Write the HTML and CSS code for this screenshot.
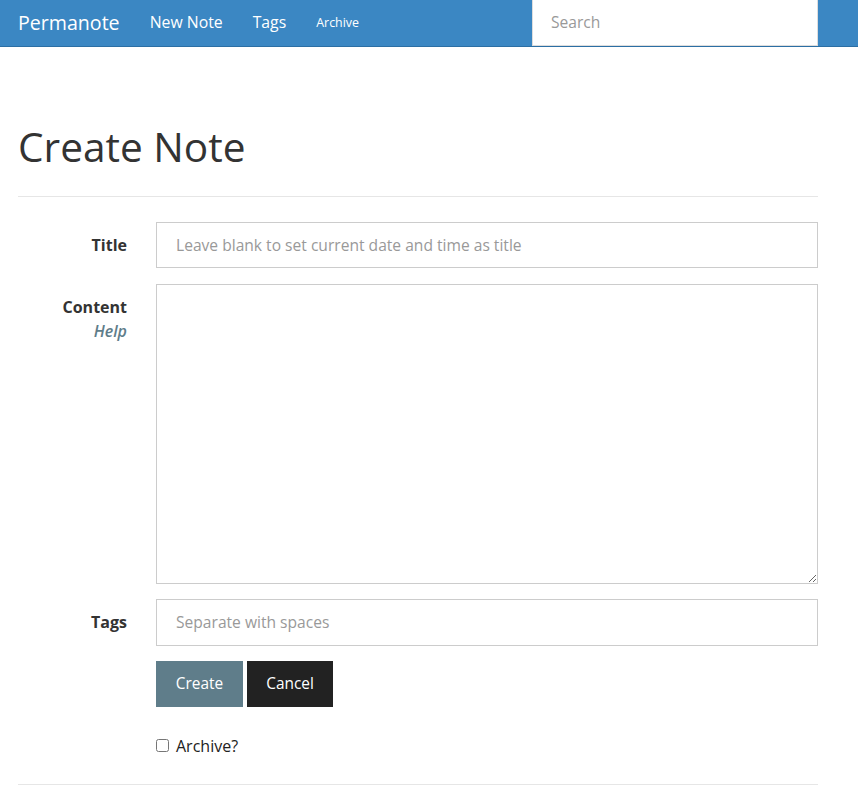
FILE: index.html
```html
<!DOCTYPE html>
<html lang="en">
<head>
<meta charset="utf-8">
<title>Create Note - Permanote</title>
<link rel="stylesheet" href="styles.css">
</head>
<body>
<nav class="navbar">
  <a class="brand" href="#">Permanote</a>
  <a class="nav-link" href="#">New Note</a>
  <a class="nav-link" href="#">Tags</a>
  <a class="nav-link small" href="#">Archive</a>
  <div class="spacer"></div>
  <input class="search" type="text" placeholder="Search">
</nav>
<main class="container">
  <h1 class="page-title">Create Note</h1>
  <hr class="rule">
  <form class="form">
    <div class="row">
      <label class="label">Title</label>
      <input class="field" type="text" placeholder="Leave blank to set current date and time as title">
    </div>
    <div class="row">
      <div class="label">
        <div>Content</div>
        <a class="help" href="#">Help</a>
      </div>
      <textarea class="field area"></textarea>
    </div>
    <div class="row row-tags">
      <label class="label">Tags</label>
      <input class="field" type="text" placeholder="Separate with spaces">
    </div>
    <div class="row row-buttons">
      <div class="label"></div>
      <div class="buttons">
        <button type="button" class="btn btn-primary">Create</button>
        <button type="button" class="btn btn-dark">Cancel</button>
      </div>
    </div>
    <div class="row">
      <div class="label"></div>
      <label class="check"><input type="checkbox" class="checkbox"> Archive?</label>
    </div>
  </form>
  <hr class="rule bottom">
</main>
</body>
</html>
```
FILE: styles.css
```css
* { box-sizing: border-box; }
html, body { margin: 0; padding: 0; }
body {
  font-family: "Open Sans", "DejaVu Sans", sans-serif;
  font-size: 15.6px;
  color: #333;
  background: #fff;
}
.navbar {
  display: flex;
  align-items: center;
  height: 47px;
  background: #3b87c3;
  border-bottom: 1px solid #2c6fa4;
  padding-left: 18px;
  padding-right: 40px;
  padding-bottom: 2px;
}
.navbar a { color: #fff; text-decoration: none; }
.brand { font-size: 19.6px; margin-right: 30px; }
.nav-link { font-size: 15.8px; margin-right: 30px; }
.nav-link.small { font-size: 12.4px; }
.spacer { flex: 1; }
.search {
  width: 286px;
  height: 46px;
  align-self: flex-start;
  border: 1px solid #ddd;
  border-top: none;
  padding: 0 18px 2px;
  font-family: inherit;
  font-size: 15.6px;
  color: #555;
  outline: none;
}
.search::placeholder { color: #999; }
.container {
  width: 800px;
  margin-left: 18px;
  padding-top: 76px;
}
.page-title {
  margin: 0;
  font-size: 40.6px;
  font-weight: 400;
  line-height: 1.2;
  color: #333;
}
.rule {
  border: 0;
  border-top: 1px solid #e6e6e6;
  margin: 24px 0 25px;
}
.rule.bottom { margin: 27px 0 0; }
.form { display: flex; flex-direction: column; gap: 16px; }
.row { display: flex; align-items: flex-start; }
.row-tags { margin-top: -1px; }
.row-tags .field { height: 47px; }
.row-buttons { margin-top: -1px; }
.label {
  width: 138px;
  padding-right: 29px;
  text-align: right;
  font-weight: 700;
  font-size: 16px;
  line-height: 24px;
  padding-top: 11px;
  color: #333;
}
.help {
  font-weight: 600;
  font-style: italic;
  color: #5f7d8a;
  text-decoration: none;
  display: block;
}
.field {
  flex: 1;
  height: 46px;
  border: 1px solid #ccc;
  padding: 0 19px;
  font-family: inherit;
  font-size: 15.6px;
  color: #555;
  background: #fff;
  outline: none;
}
.field::placeholder { color: #999; }
.area { height: 300px; resize: vertical; display: block; }
.buttons { display: flex; gap: 4px; }
.btn {
  height: 46px;
  border: 0;
  width: 87px;
  padding: 0;
  font-family: inherit;
  font-size: 15.4px;
  color: #fff;
  cursor: pointer;
}
.btn-dark { width: 86px; }
.btn-primary { background: #5f7d8a; }
.btn-dark { background: #222; }
.check {
  display: flex;
  align-items: center;
  gap: 7px;
  padding-top: 12px;
  font-size: 16px;
  color: #222;
}
.checkbox { margin: 0; width: 13px; height: 13px; }
```
